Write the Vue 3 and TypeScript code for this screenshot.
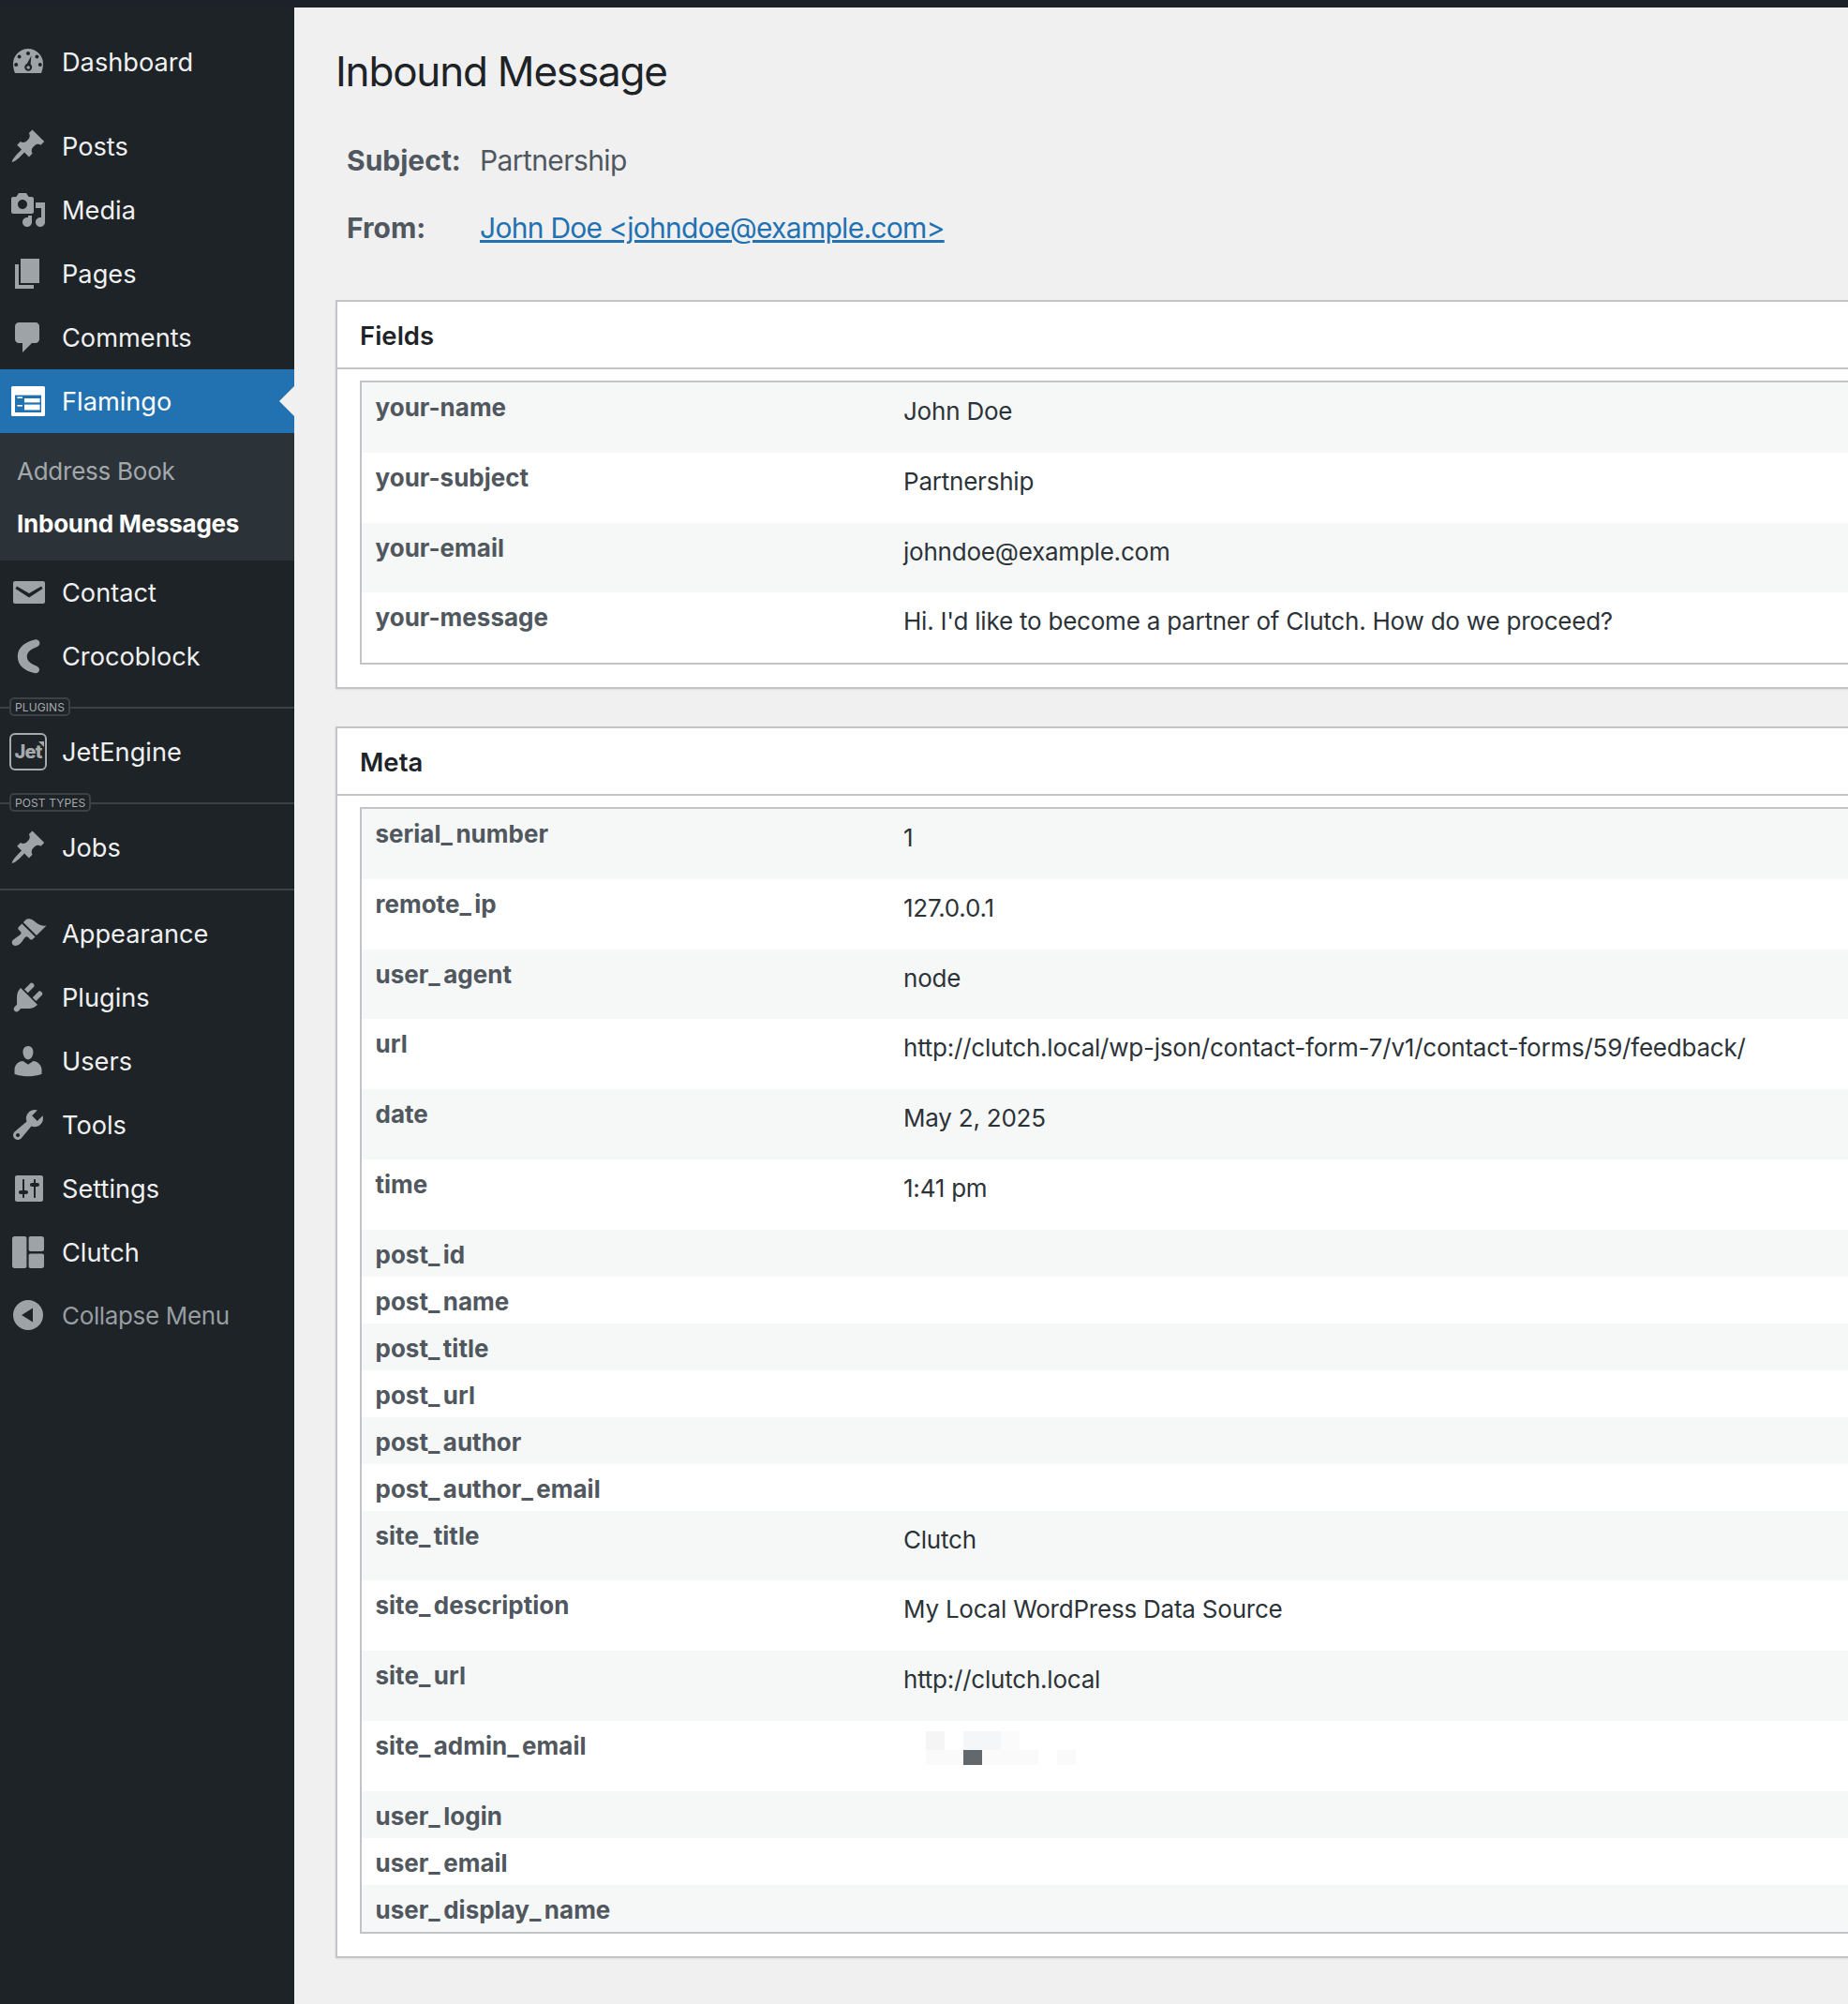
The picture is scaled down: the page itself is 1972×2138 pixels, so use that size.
<script setup lang="ts">
interface MenuEntry { kind: 'item' | 'divider' | 'sep' | 'sub'; label?: string; icon?: string; gap?: boolean; cur?: boolean; dim?: boolean }
const paths: Record<string, string> = {
  posts: 'M10.44 3.02l1.82-1.82 6.36 6.35-1.83 1.82c-1.05-.68-2.48-.57-3.41.36l-.75.75c-.92.93-1.04 2.35-.35 3.41l-1.83 1.82-2.41-2.41-2.8 2.79c-.42.42-3.38 2.71-3.8 2.29s1.86-3.39 2.28-3.81l2.79-2.79L4.1 9.36l1.83-1.82c1.05.69 2.48.57 3.4-.36l.75-.75c.93-.92 1.05-2.35.36-3.41z',
  media: 'M13 11V4c0-.55-.45-1-1-1h-1.67L9 1H5L3.67 3H2c-.55 0-1 .45-1 1v7c0 .55.45 1 1 1h10c.55 0 1-.45 1-1zM7 4.5c1.38 0 2.5 1.12 2.5 2.5S8.38 9.5 7 9.5 4.5 8.38 4.5 7 5.62 4.5 7 4.5zM14 6h5v10.5c0 1.38-1.12 2.5-2.5 2.5S14 17.88 14 16.5s1.12-2.5 2.5-2.5c.17 0 .34.02.5.05V9h-3V6zm-4 8.05V13h2v3.5c0 1.38-1.12 2.5-2.5 2.5S7 17.88 7 16.5 8.12 14 9.5 14c.17 0 .34.02.5.05z',
  pages: 'M6 15V2h10v13H6zm-1 1h8v2H3V5h2v11z',
  comments: 'M5 2h9c1.1 0 2 .9 2 2v7c0 1.1-.9 2-2 2h-2l-5 5v-5H5c-1.1 0-2-.9-2-2V4c0-1.1.9-2 2-2z',
  dashboard: 'M2 11A8 8 0 0 1 18 11C18 12.800 17.600 14.500 17 16H3C2.400 14.500 2 12.800 2 11ZM10 4.500a1 1 0 1 1 0 2 1 1 0 0 1 0-2zM5.300 6.300a1 1 0 1 1 0 2 1 1 0 0 1 0-2zM14.700 6.300a1 1 0 1 1 0 2 1 1 0 0 1 0-2zM3.600 10.500a1 1 0 1 1 0 2 1 1 0 0 1 0-2zM16.400 10.500a1 1 0 1 1 0 2 1 1 0 0 1 0-2zM11.700 6.800L11.300 11.300c.5.4.8 1 .8 1.600 0 1.100-.9 2-2 2s-2-.9-2-2c0-.9.6-1.600 1.300-1.900zM10.100 12.100a.9.9 0 1 0 0 1.800.9.9 0 0 0 0-1.800z',
  mail: 'M3 4h15c.6 0 1 .4 1 1v10c0 .6-.4 1-1 1H3c-.6 0-1-.4-1-1V5c0-.6.4-1 1-1zM4 6.800L3.200 8l7.300 4.800L17.800 8 17 6.800l-6.500 3.700z',
  appearance: 'M14.48 11.06L7.41 3.99l1.5-1.5c.5-.56 2.3-.47 3.51.32 1.21.8 1.43 1.28 2.91 2.1 1.18.64 2.45 1.26 4.45.85zm-.71.71L6.7 4.7 4.93 6.47c-.39.39-.39 1.02 0 1.41l1.06 1.06c.39.39.39 1.03 0 1.42-.6.6-1.43 1.11-2.21 1.69-.35.26-.7.53-1.01.84C1.43 13.23.91 15 1.91 16 2.91 17 4.67 16.47 6 15.13c.31-.31.58-.66.84-1.01.58-.78 1.09-1.61 1.69-2.21.39-.39 1.02-.39 1.41 0l1.06 1.06c.39.39 1.02.39 1.41 0z',
  plugins: 'M13.11 4.36L9.87 7.6 8 5.73l3.24-3.24c.35-.34 1.05-.2 1.56.32.52.51.66 1.21.31 1.55zm-8 1.77l.91-1.12 9.01 9.01-1.19.84c-.71.71-2.63 1.16-3.82 1.16H6.14L4.9 17.26c-.59.59-1.54.59-2.12 0-.59-.58-.59-1.53 0-2.12l1.24-1.24v-3.88c0-1.13.4-3.19 1.09-3.89zm7.26 3.97l3.24-3.24c.34-.35 1.04-.21 1.55.31.52.51.66 1.21.31 1.55l-3.24 3.25z',
  users: 'M10 9.25c-2.27 0-2.73-3.44-2.73-3.44C7 4.02 7.82 2 9.97 2c2.16 0 2.98 2.02 2.71 3.81 0 0-.41 3.44-2.68 3.44zm0 2.57L12.72 10c2.39 0 4.52 2.33 4.52 4.53v2.49s-3.65 1.13-7.24 1.13c-3.65 0-7.24-1.13-7.24-1.13v-2.49c0-2.25 1.94-4.48 4.47-4.48z',
  tools: 'M16.68 9.77c-1.34 1.34-3.3 1.67-4.95.99l-5.41 6.52c-.99.99-2.59.99-3.58 0s-.99-2.59 0-3.57l6.52-5.42c-.68-1.65-.35-3.61.99-4.95 1.28-1.28 3.12-1.62 4.72-1.06l-2.89 2.89 2.82 2.82 2.86-2.87c.53 1.58.18 3.39-1.08 4.65zM3.81 16.21c.4.39 1.04.39 1.43 0 .4-.4.4-1.04 0-1.43-.39-.4-1.03-.4-1.43 0-.39.39-.39 1.03 0 1.43z',
  settings: 'M18 16V4c0-.55-.45-1-1-1H4c-.55 0-1 .45-1 1v12c0 .55.45 1 1 1h13c.55 0 1-.45 1-1zM8 11h1c.55 0 1 .45 1 1s-.45 1-1 1H8v1.5c0 .28-.22.5-.5.5s-.5-.22-.5-.5V13H6c-.55 0-1-.45-1-1s.45-1 1-1h1V5.5c0-.28.22-.5.5-.5s.5.22.5.5V11zm5-2h-1c-.55 0-1-.45-1-1s.45-1 1-1h1V5.5c0-.28.22-.5.5-.5s.5.22.5.5V7h1c.55 0 1 .45 1 1s-.45 1-1 1h-1v5.5c0 .28-.22.5-.5.5s-.5-.22-.5-.5V9z',
  clutch: 'M2.700 1.500h5.500c.6 0 1 .4 1 1v15c0 .6-.4 1-1 1H2.700c-.7 0-1.200-.5-1.200-1.200V2.700c0-.7.5-1.200 1.200-1.200zM11.300 1.500h6c.7 0 1.200.5 1.200 1.200v5.800c0 .6-.4 1-1 1h-6.200c-.6 0-1-.4-1-1v-6c0-.6.4-1 1-1zM11.300 10.700h6.200c.6 0 1 .4 1 1v5.600c0 .7-.5 1.200-1.200 1.200h-6c-.6 0-1-.4-1-1v-5.800c0-.6.4-1 1-1z',
  croco: 'M13.500 1.200c1.400-.4 2.700.6 2.700 1.800 0 1-.6 1.700-1.600 2.100C11.400 6.300 9.400 7.800 9.400 10.200c0 2.300 1.900 3.700 5 5 1 .4 1.600 1.100 1.600 2 0 1.300-1.300 2.200-2.700 1.800C8.300 17.800 4.400 15.200 4.400 10.100 4.400 5.300 8.300 2.500 13.500 1.200z',
  collapse: 'M10 2a8 8 0 1 1 0 16 8 8 0 0 1 0-16zM12.500 6.300v7.500l-6-3.750z',
}
const menu: MenuEntry[] = [
  { kind: 'item', label: 'Dashboard', icon: 'dashboard' },
  { kind: 'item', label: 'Posts', icon: 'posts', gap: true },
  { kind: 'item', label: 'Media', icon: 'media' },
  { kind: 'item', label: 'Pages', icon: 'pages' },
  { kind: 'item', label: 'Comments', icon: 'comments' },
  { kind: 'item', label: 'Flamingo', icon: 'flamingo', cur: true },
  { kind: 'sub' },
  { kind: 'item', label: 'Contact', icon: 'mail' },
  { kind: 'item', label: 'Crocoblock', icon: 'croco' },
  { kind: 'divider', label: 'PLUGINS' },
  { kind: 'item', label: 'JetEngine', icon: 'jet' },
  { kind: 'divider', label: 'POST TYPES' },
  { kind: 'item', label: 'Jobs', icon: 'posts' },
  { kind: 'sep' },
  { kind: 'item', label: 'Appearance', icon: 'appearance' },
  { kind: 'item', label: 'Plugins', icon: 'plugins' },
  { kind: 'item', label: 'Users', icon: 'users' },
  { kind: 'item', label: 'Tools', icon: 'tools' },
  { kind: 'item', label: 'Settings', icon: 'settings' },
  { kind: 'item', label: 'Clutch', icon: 'clutch' },
  { kind: 'item', label: 'Collapse Menu', icon: 'collapse', dim: true },
]
const fields: [string, string][] = [
  ['your-name', 'John Doe'],
  ['your-subject', 'Partnership'],
  ['your-email', 'johndoe@example.com'],
  ['your-message', "Hi. I'd like to become a partner of Clutch. How do we proceed?"],
]
const meta: [string, string][] = [
  ['serial_number', '1'],
  ['remote_ip', '127.0.0.1'],
  ['user_agent', 'node'],
  ['url', 'http://clutch.local/wp-json/contact-form-7/v1/contact-forms/59/feedback/'],
  ['date', 'May 2, 2025'],
  ['time', '1:41 pm'],
  ['post_id', ''],
  ['post_name', ''],
  ['post_title', ''],
  ['post_url', ''],
  ['post_author', ''],
  ['post_author_email', ''],
  ['site_title', 'Clutch'],
  ['site_description', 'My Local WordPress Data Source'],
  ['site_url', 'http://clutch.local'],
  ['site_admin_email', '\u00a0'],
  ['user_login', ''],
  ['user_email', ''],
  ['user_display_name', ''],
]
const panels = [
  { title: 'Fields', rows: fields },
  { title: 'Meta', rows: meta },
]
// Mosaic that hides the admin e-mail in the reference: [x, y, w, h, colour]
const mosaic: [number, number, number, number, string][] = [
  [0, 0, 20, 20, '#f5f5f6'],
  [40, 0, 40, 20, '#f5f6f8'],
  [80, 0, 20, 20, '#fbfbfb'],
  [0, 20, 120, 16, '#fafafa'],
  [140, 20, 20, 16, '#fafafa'],
  [40, 20, 20, 16, '#63686c'],
]
</script>

<template>
  <div class="page">
    <div class="topbar"></div>
    <div class="layout">
      <nav class="sidebar">
        <template v-for="(m, i) in menu" :key="i">
          <a v-if="m.kind === 'item'" class="item" :class="{ gap: m.gap, cur: m.cur, dim: m.dim }">
            <span v-if="m.icon === 'jet'" class="jet"><span>Jet</span><i class="jet-tri"></i></span>
            <svg v-else-if="m.icon === 'flamingo'" class="icon" viewBox="0 0 20 20">
              <rect x="1" y="2" width="18" height="16" rx=".8" fill="#fff" />
              <rect x="3" y="6.800" width="14" height="9.200" fill="#2271b1" />
              <rect x="4.200" y="7.700" width="2.800" height=".8" fill="#fff" />
              <rect x="4.200" y="12" width="2.800" height=".8" fill="#fff" />
              <rect x="8" y="8.500" width="8.300" height="2.200" fill="#fff" />
              <rect x="8" y="11.800" width="8.300" height="2.900" fill="#fff" />
            </svg>
            <svg v-else class="icon" viewBox="0 0 20 20"><path :d="paths[m.icon as string]" fill-rule="evenodd" /></svg>
            <span class="label">{{ m.label }}</span>
          </a>
          <div v-else-if="m.kind === 'sub'" class="submenu">
            <a class="sublink">Address Book</a>
            <a class="sublink on">Inbound Messages</a>
          </div>
          <div v-else-if="m.kind === 'divider'" class="divider">
            <i class="stub"></i><span class="badge">{{ m.label }}</span><i class="rule"></i>
          </div>
          <div v-else class="sep"></div>
        </template>
      </nav>
      <main class="main">
        <h1>Inbound Message</h1>
        <div class="head-table">
          <div class="head-row"><b>Subject:</b><span>Partnership</span></div>
          <div class="head-row"><b>From:</b><a href="#">John Doe &lt;johndoe@example.com&gt;</a></div>
        </div>
        <section v-for="p in panels" :key="p.title" class="panel">
          <h2>{{ p.title }}</h2>
          <div class="inside">
            <table>
              <tbody>
                <tr v-for="(r, idx) in p.rows" :key="r[0]" :class="{ alt: idx % 2 === 0 }">
                  <th><template v-for="(part, n) in r[0].split('_')" :key="n"><span v-if="n" class="us">_</span>{{ part }}</template></th>
                  <td :class="{ mosaic: r[0] === 'site_admin_email' }">
                    <p v-if="r[1]">{{ r[1] }}</p>
                    <template v-if="r[0] === 'site_admin_email'">
                      <i v-for="(b, k) in mosaic" :key="k" class="px"
                        :style="{ left: b[0] + 24 + 'px', top: b[1] + 11 + 'px', width: b[2] + 'px', height: b[3] + 'px', background: b[4] }"></i>
                    </template>
                  </td>
                </tr>
              </tbody>
            </table>
          </div>
        </section>
      </main>
    </div>
  </div>
</template>

<style>
html, body { margin: 0; background: #f0f0f1; overflow: hidden; }
</style>

<style scoped>
.page { width: 1972px; height: 2138px; overflow: hidden; font-family: Inter, "Liberation Sans", sans-serif; background: #f0f0f1; display: flex; flex-direction: column; }
.topbar { height: 8px; background: #1d2129; flex: none; }
.layout { flex: 1; display: flex; min-height: 0; }
.sidebar { width: 314px; flex: none; background: #1d2327; padding-top: 24px; box-sizing: border-box; }
.item { display: flex; align-items: center; height: 68px; position: relative; color: #f0f0f1; font-size: 27.2px; }
.item.gap { margin-top: 22px; }
.item.cur { background: #2271b1; color: #fff; }
.item.cur::after { content: ""; position: absolute; right: 0; top: 18px; border: 16px solid transparent; border-left: 0; border-right-color: #f0f0f1; }
.item.dim { color: #989da1; font-size: 26px; letter-spacing: -.35px; margin-top: -1px; }
.icon { width: 40px; height: 40px; margin-left: 10px; fill: #9ea3a8; flex: none; }
.item.cur .icon { fill: #fff; }
.label { margin-left: 16px; }
.jet { position: relative; width: 40px; height: 40px; margin-left: 10px; box-sizing: border-box; border: 2px solid #a7aaad; border-radius: 6px; display: flex; align-items: center; justify-content: center; color: #a7aaad; font-size: 20px; font-weight: 800; letter-spacing: -.8px; flex: none; }
.jet-tri { position: absolute; right: 1px; top: 7px; border-style: solid; border-width: 0 6px 6px 0; border-color: transparent #a7aaad transparent transparent; }
.submenu { height: 136px; box-sizing: border-box; background: #2c3338; padding-top: 13px; }
.sublink { display: block; height: 56px; line-height: 56px; padding-left: 18px; font-size: 26px; letter-spacing: -.25px; color: #a3a8ad; }
.sublink.on { color: #fff; font-weight: 700; }
.divider { height: 34px; padding-top: 8px; box-sizing: border-box; display: flex; align-items: center; }
.stub { width: 10px; height: 2px; background: #3c4146; }
.rule { flex: 1; height: 2px; background: #3c4146; }
.badge { height: 20px; line-height: 17px; box-sizing: border-box; border: 2px solid #3c4146; border-radius: 5px; padding: 0 4px; margin-bottom: 2px; font-size: 12px; color: #a7aaad; letter-spacing: .1px; }
.sep { height: 24px; box-sizing: border-box; display: flex; align-items: flex-start; padding-top: 10px; }
.sep::before { content: ""; display: block; width: 100%; height: 2px; background: #3c4146; }
.main { flex: 1; min-width: 0; padding: 0 0 0 44px; color: #3c434a; }
h1 { margin: 0; padding-top: 44px; font-size: 44px; line-height: 48px; font-weight: 400; letter-spacing: -1.2px; color: #1d2327; }
.head-table { margin: 51px 0 25px 12px; }
.head-row { display: grid; grid-template-columns: 142px auto; height: 72px; align-items: start; font-size: 30px; line-height: 40px; color: #50575e; }
.head-row b { font-weight: 700; }
.head-row span { letter-spacing: -.6px; }
.head-row a { color: #2271b1; text-decoration: underline; justify-self: start; letter-spacing: -.72px; }
.panel { width: 1800px; background: #fff; border: 2px solid #c3c4c7; box-shadow: 0 1px 2px rgba(0, 0, 0, .08); margin-bottom: 40px; box-sizing: border-box; }
h2 { margin: 0; height: 72px; box-sizing: border-box; border-bottom: 2px solid #c3c4c7; padding-left: 24px; font-size: 27.5px; line-height: 72px; font-weight: 600; color: #1d2327; }
.inside { padding: 12px 0 24px 24px; }
table { width: 100%; border-collapse: separate; border-spacing: 0; border: 2px solid #c3c4c7; table-layout: fixed; font-size: 26px; }
th { width: 578px; height: 50px; padding: 4px 0 0 14.5px; box-sizing: border-box; text-align: left; vertical-align: top; font-weight: 700; line-height: 46px; color: #50575e; }
.us { letter-spacing: 3.5px; }
td { padding: 0; vertical-align: top; color: #2c3338; letter-spacing: -.22px; }
tr.alt th, tr.alt td { background: #f6f7f7; }
td p { margin: 17px 0 29.75px; line-height: 28px; }
td.mosaic { position: relative; }
.px { position: absolute; display: block; }
</style>
